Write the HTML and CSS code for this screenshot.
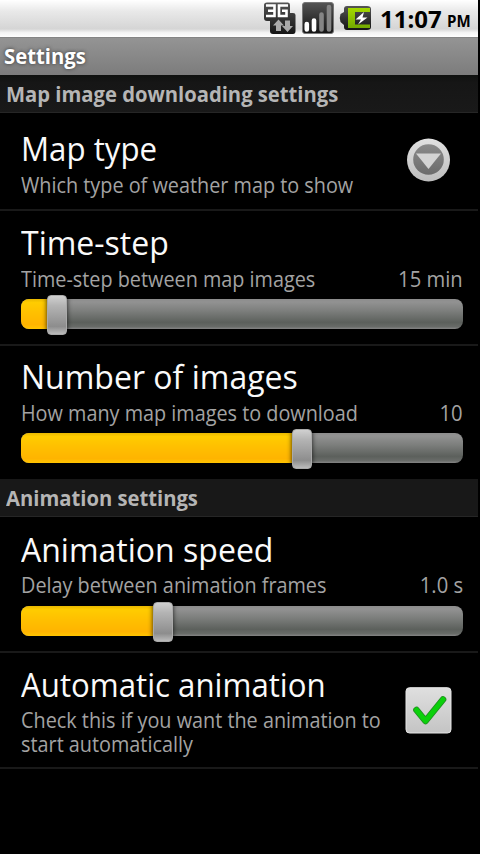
FILE: index.html
```html
<!DOCTYPE html>
<html lang="en">
<head>
<meta charset="utf-8">
<title>Settings</title>
<link rel="stylesheet" href="styles.css">
</head>
<body>
<div class="screen">
  <header class="status">
    <svg class="icons" width="112" height="37" viewBox="0 0 112 37">
      <defs>
        <linearGradient id="dark" x1="0" y1="0" x2="0" y2="1"><stop offset="0" stop-color="#555"/><stop offset=".5" stop-color="#333"/><stop offset="1" stop-color="#151515"/></linearGradient>
        <linearGradient id="lime" x1="0" y1="0" x2="0" y2="1"><stop offset="0" stop-color="#a4d900"/><stop offset="1" stop-color="#73a900"/></linearGradient>
      </defs>
      <path d="M3 2.500H25Q27 2.500 27 5V13H30Q32.500 13 32.500 15V31Q32.500 34 30 34H10Q7 34 7 31V21H4Q1 21 1 18V5Q1 2.500 4 2.500Z" fill="url(#dark)"/>
      <path d="M3 5.500H11.500V16H3M5 10.800H11M25 5.500H16V16H23.500V10.800H19" fill="none" stroke="#fff" stroke-width="2.600"/>
      <path d="M15.500 19.500L21 25.500H18V31H13V25.500H10ZM24.500 32L19 26H22V20.500H27V26H30Z" fill="#aaa"/>
      <rect x="39.500" y="2.500" width="31" height="31" rx="2.500" fill="url(#dark)" stroke="#777" stroke-width="1"/>
      <g stroke-width="4.600" stroke-linecap="round"><path d="M43.800 24V29.500M51 20.500V29.500" stroke="#fff"/><path d="M58.500 14.500V29.500M66 7V29.500" stroke="#858585"/></g>
      <path d="M84 6H104Q108 6 108 9V27Q108 30 104 30H84Q81 30 81 27V25L77.500 22Q76 18 77.500 14L81 12V9Q81 6 84 6Z" fill="url(#dark)"/>
      <path d="M85 8H107V12H92V24.500H107V28H85Z" fill="url(#lime)"/>
      <path d="M101 12L92.500 19.500H98L95 24.500L104.500 17.500H99.500Z" fill="#fff"/>
    </svg>
    <span class="clock">11:07</span><span class="ampm">PM</span>
  </header>
  <h1 class="titlebar"><span class="x t0">Settings</span></h1>
  <h2 class="category first"><span class="x c">Map image downloading settings</span></h2>
  <section class="row short">
    <div class="copy">
      <h3><span class="x t1">Map type</span></h3>
      <p><span class="x s">Which type of weather map to show</span></p>
    </div>
    <svg class="widget" width="46" height="46" viewBox="0 0 46 46">
      <defs>
        <linearGradient id="ring" x1="0" y1="0" x2="0" y2="1"><stop offset="0" stop-color="#e2e2e2"/><stop offset="1" stop-color="#bdbdbd"/></linearGradient>
        <linearGradient id="well" x1="0" y1="0" x2="0" y2="1"><stop offset="0" stop-color="#8b8b8b"/><stop offset="1" stop-color="#6b6b6b"/></linearGradient>
      </defs>
      <circle cx="23.500" cy="23" r="21.500" fill="url(#ring)"/>
      <circle cx="23.500" cy="22.500" r="15.300" fill="url(#well)"/>
      <path d="M11 16.500H36L23.500 32Z" fill="#d4d4d4"/>
    </svg>
  </section>
  <section class="row tall">
    <h3><span class="x t2">Time-step</span></h3>
    <p><span class="x s">Time-step between map images</span><span class="x v">15 min</span></p>
    <div class="slider"><div class="fill" style="width:35.500px"></div><div class="thumb" style="left:25.500px"></div></div>
  </section>
  <section class="row tall last">
    <h3><span class="x t2">Number of images</span></h3>
    <p><span class="x s">How many map images to download</span><span class="x v">10</span></p>
    <div class="slider"><div class="fill" style="width:280px"></div><div class="thumb" style="left:270.500px"></div></div>
  </section>
  <h2 class="category"><span class="x c">Animation settings</span></h2>
  <section class="row tall lower">
    <h3><span class="x t2">Animation speed</span></h3>
    <p><span class="x s">Delay between animation frames</span><span class="x v">1.0 s</span></p>
    <div class="slider"><div class="fill" style="width:141px"></div><div class="thumb" style="left:131.500px"></div></div>
  </section>
  <section class="row check">
    <div class="copy">
      <h3><span class="x t1">Automatic animation</span></h3>
      <p><span class="x s">Check this if you want the animation to</span></p>
      <p><span class="x s">start automatically</span></p>
    </div>
    <svg class="widget" width="47" height="47" viewBox="0 0 47 47">
      <defs><linearGradient id="box" x1="0" y1="0" x2="0" y2="1"><stop offset="0" stop-color="#dfdfdf"/><stop offset="1" stop-color="#c4c4c4"/></linearGradient></defs>
      <rect x="1" y=".7" width="45" height="45.300" rx="3.500" fill="url(#box)" stroke="#e6e6e6"/>
      <path d="M11.500 23L20.500 34L38 12.500" fill="none" stroke="#238c22" stroke-width="6.600" stroke-linecap="round" stroke-linejoin="round"/>
      <path d="M11.500 23L20.500 34L38 12.500" fill="none" stroke="#0bd00b" stroke-width="5" stroke-linecap="round" stroke-linejoin="round"/>
    </svg>
  </section>
</div>
</body>
</html>
```
FILE: styles.css
```css
* { box-sizing: border-box; }
body { margin: 0; background: #000; font-family: "Open Sans", "Noto Sans", sans-serif; }
h1, h2, h3, p { margin: 0; }
.screen { width: 477.5px; height: 854px; overflow: hidden; white-space: nowrap; }
.status { display: flex; height: 37px; padding-left: 263px; background: linear-gradient(#fff, #e9e9e9 30%, #d5d5d5 78%, #f4f4f4 88%, #fff); }
.clock { margin-left: 5px; font-size: 24px; font-weight: 700; line-height: 37px; color: #000; }
.ampm { margin: 0 0 0 5px; font-size: 16px; font-weight: 700; line-height: 42px; color: #000; transform: scaleX(.94); transform-origin: left center; }
.icons { flex: none; }
.x { display: inline-block; transform-origin: left center; }
.t0 { transform: scaleX(.965); }
.t1 { transform: scaleX(.946); }
.t2 { transform: scaleX(.97); }
.c { transform: scaleX(.94); }
.s { transform: scaleX(.922); }
.v { transform: scaleX(.94); transform-origin: right center; }
.titlebar { height: 38px; padding-left: 4px; border-top: 1px solid #858585; background: linear-gradient(#949494, #7c7c7c); color: #fff; font-size: 21px; line-height: 36px; text-shadow: 0 0 4px #333; }
.category { height: 38px; padding-left: 6px; border-bottom: 1px solid #262626; background: #181818; color: #b5b5b5; font-size: 21.5px; line-height: 38px; }
.first { background: linear-gradient(#0f110f, #161616 20%, #191919); }
.row { padding-left: 21px; border-bottom: 2px solid #191919; }
.row h3 { font-size: 33px; font-weight: 400; line-height: 44px; height: 44px; color: #fafafa; }
.row p { display: flex; justify-content: space-between; margin-right: 14.5px; font-size: 21.5px; line-height: 24px; height: 24px; color: #a3a3a3; }
.copy { width: 360px; }
.widget { flex: none; }
.short { display: flex; justify-content: space-between; height: 98px; padding-top: 14px; }
.short .widget { margin: 10px 26.5px 0 0; }
.row h3 + p { margin-top: 2px; }
.tall { height: 135px; padding-top: 10px; }
.last { height: 133px; padding-top: 9px; border-bottom: 0; }
.lower { height: 136px; padding-top: 11px; }
.lower h3, .check h3 { height: 43px; }
.slider { position: relative; width: 441.5px; height: 30px; margin-top: 8px; border-radius: 8px; background: linear-gradient(#8c8c8c, #929292 10%, #7c7e7c 40%, #5c605c 78%, #686b68 92%, #858585); }
.lower .slider { margin-top: 9px; }
.fill { height: 30px; border-radius: 8px 0 0 8px; background: linear-gradient(#e9b800, #fc0 12%, #ffc000 45%, #ffb400 85%, #ffc400); }
.thumb { position: absolute; top: -4px; width: 20px; height: 40px; border: 1px solid #aaa; border-radius: 4px; background: linear-gradient(#d0d0d0, #b4b4b4 25%, #8d8d8d 80%, #bbb); box-shadow: 0 0 5px rgba(0, 0, 0, .8); }
.check { display: flex; justify-content: space-between; height: 116px; padding-top: 10px; }
.check .widget { margin: 24px 26px 0 0; }
```
